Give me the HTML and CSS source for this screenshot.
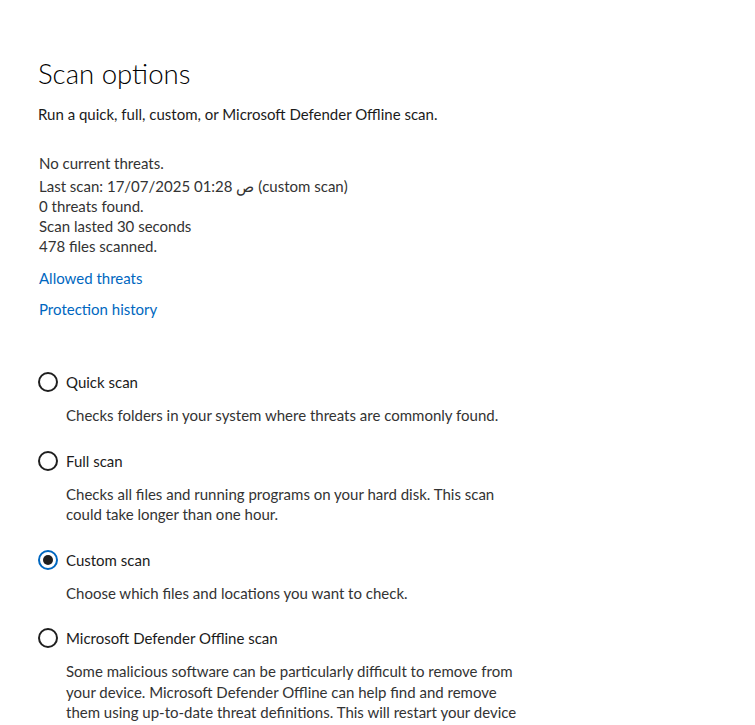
FILE: index.html
```html
<!DOCTYPE html>
<html>
<head>
<meta charset="utf-8">
<link rel="stylesheet" href="styles.css">
</head>
<body>
<main class="page">
  <h1 class="title">Scan options</h1>
  <p class="subtitle">Run a quick, full, custom, or Microsoft Defender Offline scan.</p>

  <div class="status">
    <p class="status-head">No current threats.</p>
    <p class="status-line">Last scan: 17/07/2025 01:28 <span class="ar">ص</span> (custom scan)</p>
    <p class="status-line">0 threats found.</p>
    <p class="status-line">Scan lasted 30 seconds</p>
    <p class="status-line">478 files scanned.</p>
  </div>

  <div class="links">
    <a class="link" href="#">Allowed threats</a>
    <a class="link" href="#">Protection history</a>
  </div>

  <div class="options">
    <div class="option">
      <label class="radio-row"><span class="radio"></span><span class="label">Quick scan</span></label>
      <p class="desc">Checks folders in your system where threats are commonly found.</p>
    </div>
    <div class="option">
      <label class="radio-row"><span class="radio"></span><span class="label">Full scan</span></label>
      <p class="desc">Checks all files and running programs on your hard disk. This scan could take longer than one hour.</p>
    </div>
    <div class="option">
      <label class="radio-row"><span class="radio checked"></span><span class="label">Custom scan</span></label>
      <p class="desc">Choose which files and locations you want to check.</p>
    </div>
    <div class="option">
      <label class="radio-row"><span class="radio"></span><span class="label">Microsoft Defender Offline scan</span></label>
      <p class="desc">Some malicious software can be particularly difficult to remove from your device. Microsoft Defender Offline can help find and remove them using up-to-date threat definitions. This will restart your device and will take about 15 minutes.</p>
    </div>
  </div>
</main>
</body>
</html>
```

FILE: styles.css
```css
html, body {
  margin: 0;
  padding: 0;
  background: #ffffff;
}
body {
  font-family: "Lato", "Noto Sans", "Liberation Sans", sans-serif;
  font-size: 15px;
  color: #1b1b1b;
  overflow: hidden;
  height: 725px;
}
p { margin: 0; }
.page {
  padding: 56px 0 0 38px;
}
.title {
  margin: 0;
  font-size: 27.6px;
  font-weight: 300;
  line-height: 36px;
  color: #000;
}
.subtitle {
  margin-top: 12px;
  line-height: 20px;
}
.status {
  margin-top: 29px;
  padding-left: 1px;
  color: #333;
}
.status-head {
  line-height: 20px;
  margin-bottom: 3px;
}
.status-line {
  line-height: 20px;
}
.links {
  display: flex;
  flex-direction: column;
  align-items: flex-start;
  gap: 11px;
  margin-top: 12px;
  padding-left: 1px;
}
.link {
  color: #0067c0;
  text-decoration: none;
  line-height: 20px;
}
.options {
  margin-top: 53px;
  display: flex;
  flex-direction: column;
  gap: 25px;
}
.radio-row {
  display: flex;
  align-items: center;
  gap: 8px;
  height: 20px;
}
.radio {
  box-sizing: border-box;
  width: 20px;
  height: 20px;
  border: 2px solid #1f1f1f;
  border-radius: 50%;
  display: flex;
  align-items: center;
  justify-content: center;
  flex: none;
}
.radio.checked {
  border-color: #0067c0;
}
.radio.checked::after {
  content: "";
  width: 10px;
  height: 10px;
  border-radius: 50%;
  background: #1f1f1f;
}
.label {
  line-height: 20px;
  color: #1b1b1b;
}
.desc {
  margin-top: 13px;
  margin-left: 28px;
  width: 460px;
  line-height: 20.5px;
  color: #333;
}
```
